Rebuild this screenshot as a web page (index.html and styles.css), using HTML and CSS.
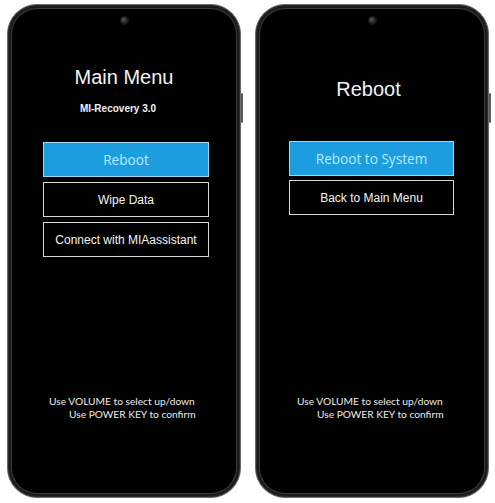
FILE: index.html
```html
<!DOCTYPE html>
<html>
<head>
<meta charset="utf-8">
<link rel="stylesheet" href="styles.css">
</head>
<body>
<div class="stage">
  <div class="phone">
    <div class="screen">
      <div class="camera"></div>
      <div class="title title-main">Main Menu</div>
      <div class="subtitle">MI-Recovery 3.0</div>
      <div class="menu menu-main">
        <div class="btn btn-active">Reboot</div>
        <div class="btn">Wipe Data</div>
        <div class="btn">Connect with MIAassistant</div>
      </div>
      <div class="footer">
        <div class="line">Use VOLUME to select up/down</div>
        <div class="line line-indent">Use POWER KEY to confirm</div>
      </div>
    </div>
  </div>
  <div class="phone">
    <div class="screen">
      <div class="camera"></div>
      <div class="title title-reboot">Reboot</div>
      <div class="menu menu-reboot">
        <div class="btn btn-active">Reboot to System</div>
        <div class="btn">Back to Main Menu</div>
      </div>
      <div class="footer">
        <div class="line">Use VOLUME to select up/down</div>
        <div class="line line-indent">Use POWER KEY to confirm</div>
      </div>
    </div>
  </div>
</div>
</body>
</html>
```
FILE: styles.css
```css
html, body {
  margin: 0;
  padding: 0;
  background: #ffffff;
}
.stage {
  display: flex;
  gap: 14px;
  padding: 4px 0 0 7px;
}
.phone {
  position: relative;
  box-sizing: border-box;
  width: 234px;
  height: 494px;
  border-radius: 30px;
  background: #1a1a1a;
  border: 1px solid #6a6a6a;
  padding: 4px;
  box-shadow: inset 0 0 0 1px #2a2a2a;
}
.phone::after {
  content: "";
  position: absolute;
  right: -3px;
  top: 88px;
  width: 2px;
  height: 30px;
  background: #5a5a5a;
  border-radius: 1px;
}
.screen {
  box-sizing: border-box;
  height: 100%;
  border-radius: 25px;
  background: #000;
  box-shadow: 0 0 0 1px #3c3c3c;
  display: flex;
  flex-direction: column;
  align-items: center;
  padding-bottom: 72px;
  font-family: "Liberation Sans", Arial, sans-serif;
  color: #f2f2f2;
}
.camera {
  margin-top: 8px;
  width: 7px;
  height: 7px;
  border-radius: 50%;
  background: radial-gradient(circle at 40% 40%, #4a5a52 0, #1c2420 60%, #0d0d0d 100%);
  box-shadow: 0 0 0 1px #151515;
}
.title {
  font-size: 20px;
  line-height: 23px;
}
.title-main {
  margin-top: 42px;
}
.title-reboot {
  margin-top: 54px;
  margin-right: 7px;
}
.subtitle {
  margin-top: 14px;
  font-size: 10px;
  font-weight: bold;
  line-height: 12px;
  margin-right: 12px;
}
.menu {
  display: flex;
  flex-direction: column;
  gap: 5px;
  align-self: flex-start;
}
.menu-main {
  margin-top: 27px;
  margin-left: 31px;
  width: 166px;
}
.menu-reboot {
  margin-top: 40px;
  margin-left: 29px;
  width: 165px;
  gap: 4px;
}
.btn {
  box-sizing: border-box;
  height: 35px;
  border: 1px solid #d8d8d8;
  display: flex;
  align-items: center;
  justify-content: center;
  font-size: 12px;
  color: #f4f4f4;
}
.btn-active {
  background: #1c9ddf;
  border-color: #9fd6f2;
  color: #b8ecff;
  font-family: "Open Sans", sans-serif;
  font-size: 13.6px;
}
.footer {
  margin-top: auto;
  align-self: flex-start;
  margin-left: 37px;
  font-family: Lato, "Open Sans", sans-serif;
  font-size: 10.2px;
  line-height: 13px;
  color: #ececec;
  white-space: nowrap;
}
.line-indent {
  padding-left: 20px;
}
```
